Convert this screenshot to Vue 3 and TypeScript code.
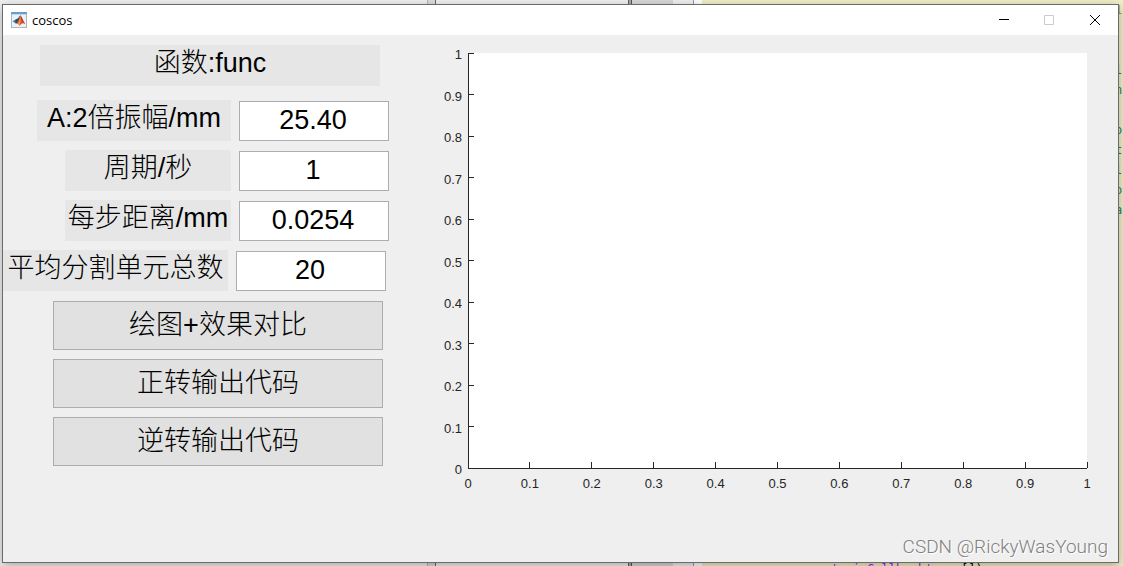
<script setup lang="ts">
import { ref } from 'vue'

interface Field {
  id: string
  label: string
  size: string
  value: string
}

const fields = ref<Field[]>([
  { id: 'amplitude', label: 'A:2倍振幅/mm', size: 'medium', value: '25.40' },
  { id: 'period', label: '周期/秒', size: 'small', value: '1' },
  { id: 'step', label: '每步距离/mm', size: 'small', value: '0.0254' },
  { id: 'units', label: '平均分割单元总数', size: 'large', value: '20' },
])

const actions: string[] = ['绘图+效果对比', '正转输出代码', '逆转输出代码']

const ticks = Array.from({ length: 11 }, (_, i) => ({
  text: String(i / 10),
  along: `${i * 10}%`,
  up: `${100 - i * 10}%`,
}))

const codeLines: string[] = ['1', '', '', 'l', 'ny', '', 'o:', 'ty', 'l', 'oy', 'a']
</script>

<template>
  <div class="desktop">
    <div class="backdrop" aria-hidden="true">
      <div class="pane files"></div>
      <div class="pane divider"></div>
      <div class="pane middle"></div>
      <div class="pane splitter"></div>
      <div class="pane gutter"></div>
      <div class="pane margin"></div>
      <div class="pane code">
        <div class="comments">
          <span v-for="(line, i) in codeLines" :key="i" :class="{ mark: i === 0 }">{{ line }}</span>
        </div>
        <div class="call"><span>'gui_Callback'</span>,&nbsp;&nbsp; []);</div>
      </div>
    </div>

    <main class="window">
      <header class="titlebar">
        <svg class="logo" viewBox="0 0 16 16" aria-hidden="true">
          <rect x="0.5" y="0.5" width="15" height="15" fill="#edf1f5" stroke="#aeb5bc" />
          <rect width="16" height="2" fill="#6c9fc5" />
          <rect x="1" y="2" width="14" height="1" fill="#c3d8e8" />
          <path d="M1.5 9.3 L5 7.3 L7 9.5 L4.8 11.6Z" fill="#3b7fb8" />
          <path d="M5 7.3 C7 7 8 5 9.3 3.2 L8.3 8.7 L7 10.8 L4.8 11.6 L4.2 9.2Z" fill="#244f7c" />
          <path d="M9.3 3.2 C11 5 12 9 14.2 12 C12 10.8 10.5 11.2 8.5 14 C8 12.4 7 11.4 4.8 11.6 C7.5 10.6 8.2 6 9.3 3.2Z" fill="#df542b" />
          <path d="M9.3 3.2 C9.8 6 9.6 10.4 8.5 14 C8.2 12.4 7.6 11.8 6.8 11.4 C8.5 9.5 8.8 6 9.3 3.2Z" fill="#f3a03b" />
          <path d="M9.3 3.2 C11 5 12 9 14.2 12 C11.8 10.4 10.4 8 9.3 3.2Z" fill="#9c2c24" />
        </svg>
        <h1>coscos</h1>
        <button type="button" class="control" aria-label="Minimize">
          <svg viewBox="0 0 11 11"><path d="M1 4.5H11" stroke="#000" /></svg>
        </button>
        <button type="button" class="control" aria-label="Maximize" disabled>
          <svg viewBox="0 0 11 11"><path d="M.5 .5H9.5V9.5H.5Z" fill="none" stroke="#ccc" /></svg>
        </button>
        <button type="button" class="control" aria-label="Close">
          <svg viewBox="0 0 11 11"><path d="M0 0L10 10M10 0L0 10" stroke="#000" /></svg>
        </button>
      </header>

      <div class="figure">
        <form class="panel" @submit.prevent>
          <h2 class="tag heading">函数:func</h2>
          <div class="fields">
            <div v-for="field in fields" :key="field.id" class="row" :class="field.size">
              <label class="tag" :for="field.id">{{ field.label }}</label>
              <input :id="field.id" v-model="field.value" type="text" />
            </div>
          </div>
          <div class="actions">
            <button v-for="action in actions" :key="action" type="button">{{ action }}</button>
          </div>
        </form>

        <svg class="axes" role="img" aria-label="axes">
          <rect width="100%" height="100%" fill="#fff" />
          <g class="lines">
            <line x1="0" y1="0" x2="0" y2="100%" />
            <line x1="0" y1="100%" x2="100%" y2="100%" />
            <template v-for="tick in ticks" :key="tick.text">
              <line x1="0" x2="6" :y1="tick.up" :y2="tick.up" />
              <svg :x="tick.along" y="100%" overflow="visible"><line x1="0" y1="0" x2="0" y2="-6" /></svg>
            </template>
          </g>
          <g class="numbers">
            <template v-for="tick in ticks" :key="tick.text">
              <text x="-6" :y="tick.up" dy="6" text-anchor="end">{{ tick.text }}</text>
              <text :x="tick.along" y="100%" dy="20" text-anchor="middle">{{ tick.text }}</text>
            </template>
          </g>
        </svg>
      </div>
      <div class="watermark">CSDN @RickyWasYoung</div>
    </main>
  </div>
</template>

<style>
body {
  margin: 0;
}
</style>

<style scoped>
* {
  box-sizing: border-box;
}

.desktop {
  position: relative;
  display: flex;
  min-height: 100vh;
  padding: 4px 4px 3px 2px;
  overflow: hidden;
  font-family: "Liberation Sans", "Noto Sans CJK SC", sans-serif;
  color: #000;
}

.backdrop {
  position: absolute;
  inset: 0;
  display: flex;
}

.pane {
  flex: none;
  background: #f0f0f0;
}

.files {
  width: 427px;
}

.divider {
  width: 9px;
  background: #dcdcdc;
  border-left: 1px solid #b4b4b4;
  border-right: 1px solid #686868;
}

.middle {
  width: 192px;
}

.splitter {
  width: 4px;
  background: #aaa;
  border-left: 1px solid #596270;
  border-right: 1px solid #555;
}

.gutter {
  width: 41px;
  background: #d8d8d8;
}

.margin {
  width: 21px;
  border-right: 1px solid #999;
}

.code {
  display: flex;
  flex: 1;
  flex-direction: column;
  justify-content: space-between;
  margin-left: 8px;
  background: #efefc8;
  font: 12px/20px "DejaVu Sans Mono", monospace;
}

.comments {
  display: flex;
  flex-direction: column;
  align-self: flex-end;
  width: 8px;
  color: #16895c;
}

.comments span {
  height: 20px;
}

.comments .mark {
  color: #a19b20;
}

.call {
  height: 7px;
  margin-left: 129px;
  overflow: hidden;
  white-space: nowrap;
}

.call span {
  color: #a020f0;
}

.window {
  position: relative;
  display: flex;
  flex: 1;
  flex-direction: column;
  background: #efefef;
  border: 1px solid #6b6b69;
  box-shadow: 0 3px 10px rgba(0, 0, 0, 0.3);
}

.titlebar {
  display: flex;
  align-items: center;
  height: 30px;
  padding-left: 8px;
  background: #fff;
}

.logo {
  width: 16px;
  height: 16px;
}

h1 {
  flex: 1;
  margin: 0 0 0 5px;
  font: 400 13px/16px "Open Sans", sans-serif;
}

.control {
  display: flex;
  align-items: center;
  justify-content: center;
  width: 46px;
  height: 30px;
  padding: 0;
  background: none;
  border: 0;
}

.control svg {
  width: 11px;
  height: 11px;
  overflow: visible;
}

.figure {
  display: flex;
  flex: 1;
  gap: 79px;
  padding: 10px 31px 94px 0;
}

.panel {
  display: flex;
  flex: none;
  flex-direction: column;
  width: 386px;
  font-size: 27px;
  font-weight: 300;
}

.tag {
  height: 41px;
  margin: 0;
  background: #e6e6e6;
  font-size: 27px;
  font-weight: 300;
  line-height: 36px;
  text-align: center;
  white-space: nowrap;
}

.heading {
  margin: 0 9px 14px 37px;
}

.fields {
  display: flex;
  flex-direction: column;
  gap: 9px;
}

.row {
  display: flex;
  gap: 8px;
  align-items: flex-end;
  justify-content: flex-end;
}

.medium .tag {
  width: 194px;
}

.small .tag {
  width: 166px;
}

.large {
  justify-content: flex-start;
}

.large .tag {
  width: 225px;
}

input {
  width: 150px;
  height: 40px;
  padding: 0 2px 2px 0;
  background: #fff;
  border: 1px solid #abadb3;
  color: inherit;
  font: inherit;
  text-align: center;
}

.actions {
  display: flex;
  flex-direction: column;
  gap: 9px;
  margin: 10px 6px 0 50px;
}

.actions button {
  height: 49px;
  padding: 0 0 6px;
  background: #e1e1e1;
  border: 1px solid #adadad;
  color: inherit;
  font: inherit;
}

.axes {
  flex: 1;
  min-width: 0;
  height: auto;
  margin-top: 8px;
  overflow: visible;
}

.lines {
  stroke: #262626;
  shape-rendering: crispEdges;
}

.numbers {
  fill: #262626;
  font-size: 13px;
}

.watermark {
  position: absolute;
  right: 10px;
  bottom: 3px;
  color: #808080;
  font: 300 19px/24px Roboto, sans-serif;
  text-shadow: 1px 1px 0 #fff;
}
</style>
